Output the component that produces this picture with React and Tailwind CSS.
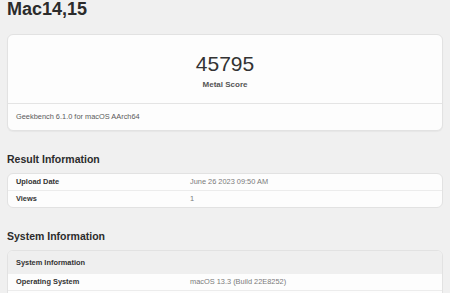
export default function App() {
  const font = { fontFamily: '"Liberation Sans", Arial, sans-serif' };
  return (
    <div className="min-h-screen bg-[#f0f0f0] px-[7px] pb-4 text-[#333]" style={font}>
      <h1 className="text-[18px] font-bold leading-[18px] text-[#2b2b2b]">Mac14,15</h1>

      <div className="mt-[16px] rounded-[6px] border border-[#e2e2e2] bg-[#fdfdfd] shadow-[0_1px_1px_rgba(0,0,0,0.04)]">
        <div className="flex h-[69px] flex-col items-center border-b border-[#e4e4e4] pt-[18px]">
          <div className="text-[21px] leading-none text-[#333]">45795</div>
          <div className="mt-[7px] text-[8px] font-semibold leading-none text-[#555]">Metal Score</div>
        </div>
        <div className="flex h-[26px] items-center px-[8px] text-[7.4px] leading-none text-[#5a5a5a]">
          Geekbench 6.1.0 for macOS AArch64
        </div>
      </div>

      <h2 className="mt-[23px] text-[10.5px] font-bold leading-none text-[#2b2b2b]">Result Information</h2>
      <div className="mt-[8px] overflow-hidden rounded-[6px] border border-[#e2e2e2] bg-[#fdfdfd]">
        <div className="flex h-[17px] items-center border-b border-[#ececec] px-[8px] text-[7.4px] leading-none">
          <div className="w-[174px] font-semibold text-[#333]">Upload Date</div>
          <div className="text-[#7a7a7a]">June 26 2023 09:50 AM</div>
        </div>
        <div className="flex h-[16px] items-center px-[8px] text-[7.4px] leading-none">
          <div className="w-[174px] font-semibold text-[#333]">Views</div>
          <div className="text-[#7a7a7a]">1</div>
        </div>
      </div>

      <h2 className="mt-[23px] text-[10.5px] font-bold leading-none text-[#2b2b2b]">System Information</h2>
      <div className="mt-[9px] overflow-hidden rounded-[6px] border border-[#e2e2e2] bg-[#fdfdfd]">
        <div className="flex h-[23px] items-center bg-[#efefef] px-[8px] text-[7.4px] font-semibold leading-none text-[#333]">
          System Information
        </div>
        <div className="flex h-[17px] items-center border-b border-[#ececec] px-[8px] text-[7.4px] leading-none">
          <div className="w-[174px] font-semibold text-[#333]">Operating System</div>
          <div className="text-[#7a7a7a]">macOS 13.3 (Build 22E8252)</div>
        </div>
        <div className="h-[16px]" />
      </div>
    </div>
  );
}
